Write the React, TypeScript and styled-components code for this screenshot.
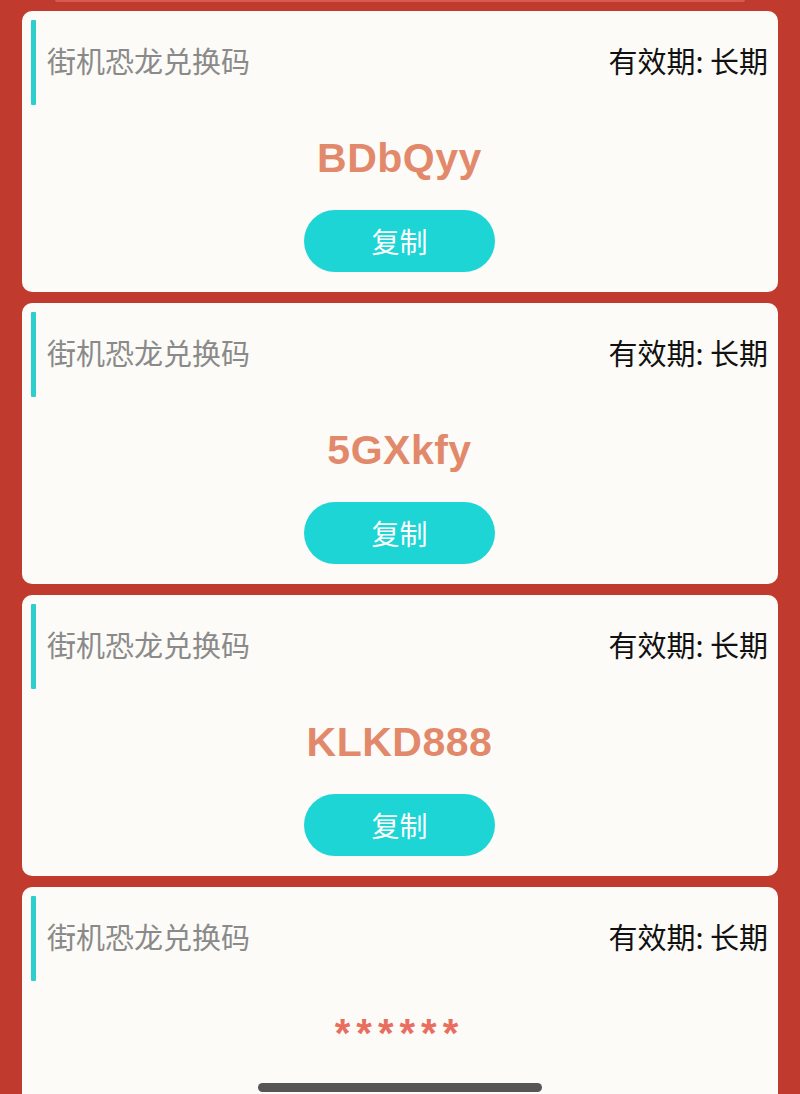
import styled, { createGlobalStyle } from "styled-components";

const GlobalStyle = createGlobalStyle`
  html, body {
    margin: 0;
    padding: 0;
    background: #c13a2e;
    overflow: hidden;
  }
  * {
    box-sizing: border-box;
  }
`;

type CodeItem = {
  name: string;
  expire: string;
  code: string;
  hidden?: boolean;
};

const codes: CodeItem[] = [
  { name: "街机恐龙兑换码", expire: "有效期: 长期", code: "BDbQyy" },
  { name: "街机恐龙兑换码", expire: "有效期: 长期", code: "5GXkfy" },
  { name: "街机恐龙兑换码", expire: "有效期: 长期", code: "KLKD888" },
  { name: "街机恐龙兑换码", expire: "有效期: 长期", code: "******", hidden: true },
];

export default function App() {
  return (
    <>
      <GlobalStyle />
      <Page>
        <PrevCardEdge />
        <List>
          {codes.map((item, i) => (
            <Card key={i}>
              <CardHeader>
                <TitleWrap>
                  <AccentBar />
                  <Title>{item.name}</Title>
                </TitleWrap>
                <Expire>{item.expire}</Expire>
              </CardHeader>
              <Code $hidden={item.hidden}>{item.code}</Code>
              {!item.hidden && <CopyButton>复制</CopyButton>}
            </Card>
          ))}
        </List>
        <HomeIndicator />
      </Page>
    </>
  );
}

const Page = styled.div`
  position: relative;
  width: 800px;
  height: 1094px;
  overflow: hidden;
  background: #c13a2e;
`;

const PrevCardEdge = styled.div`
  width: 690px;
  height: 2px;
  margin: 0 auto 0 55px;
  background: #d65a4d;
  border-radius: 0 0 6px 6px;
`;

const List = styled.div`
  display: flex;
  flex-direction: column;
  gap: 11px;
  padding: 9px 22px 0;
`;

const Card = styled.div`
  display: flex;
  flex-direction: column;
  align-items: center;
  height: 281px;
  flex-shrink: 0;
  padding: 9px 10px 0 9px;
  background: #fcfbf7;
  border-radius: 10px;
`;

const CardHeader = styled.div`
  display: flex;
  flex-shrink: 0;
  align-items: center;
  justify-content: space-between;
  width: 100%;
  height: 85px;
`;

const TitleWrap = styled.div`
  display: flex;
  align-items: center;
  height: 100%;
`;

const AccentBar = styled.div`
  width: 5px;
  height: 85px;
  background: #2ccfcb;
  border-radius: 1px;
`;

const Title = styled.span`
  margin: 0 0 4px 11px;
  font-family: "Noto Sans CJK SC", "Noto Sans", sans-serif;
  font-size: 29px;
  line-height: 1;
  color: #8a8a8a;
`;

const Expire = styled.span`
  margin-bottom: 4px;
  font-family: "Noto Sans CJK SC", "Noto Sans", sans-serif;
  font-size: 29px;
  line-height: 1;
  color: #111;
  white-space: pre;
`;

const Code = styled.div<{ $hidden?: boolean }>`
  flex-shrink: 0;
  margin-top: ${(p) => (p.$hidden ? "26px" : "27px")};
  height: 52px;
  line-height: 52px;
  font-family: "Liberation Sans", Arial, sans-serif;
  font-weight: 700;
  font-size: ${(p) => (p.$hidden ? "40px" : "41px")};
  letter-spacing: ${(p) => (p.$hidden ? "6px" : "0.5px")};
  color: ${(p) => (p.$hidden ? "#e86f5f" : "#e2896b")};
`;

const CopyButton = styled.button`
  flex-shrink: 0;
  margin-top: 26px;
  width: 191px;
  height: 62px;
  border: none;
  border-radius: 31px;
  background: #1dd5d5;
  color: #fff;
  font-family: "Noto Sans CJK SC", "Noto Sans", sans-serif;
  font-size: 28px;
  padding: 0;
`;

const HomeIndicator = styled.div`
  position: absolute;
  left: 258px;
  bottom: 2px;
  width: 284px;
  height: 9px;
  border-radius: 5px;
  background: #555;
`;
